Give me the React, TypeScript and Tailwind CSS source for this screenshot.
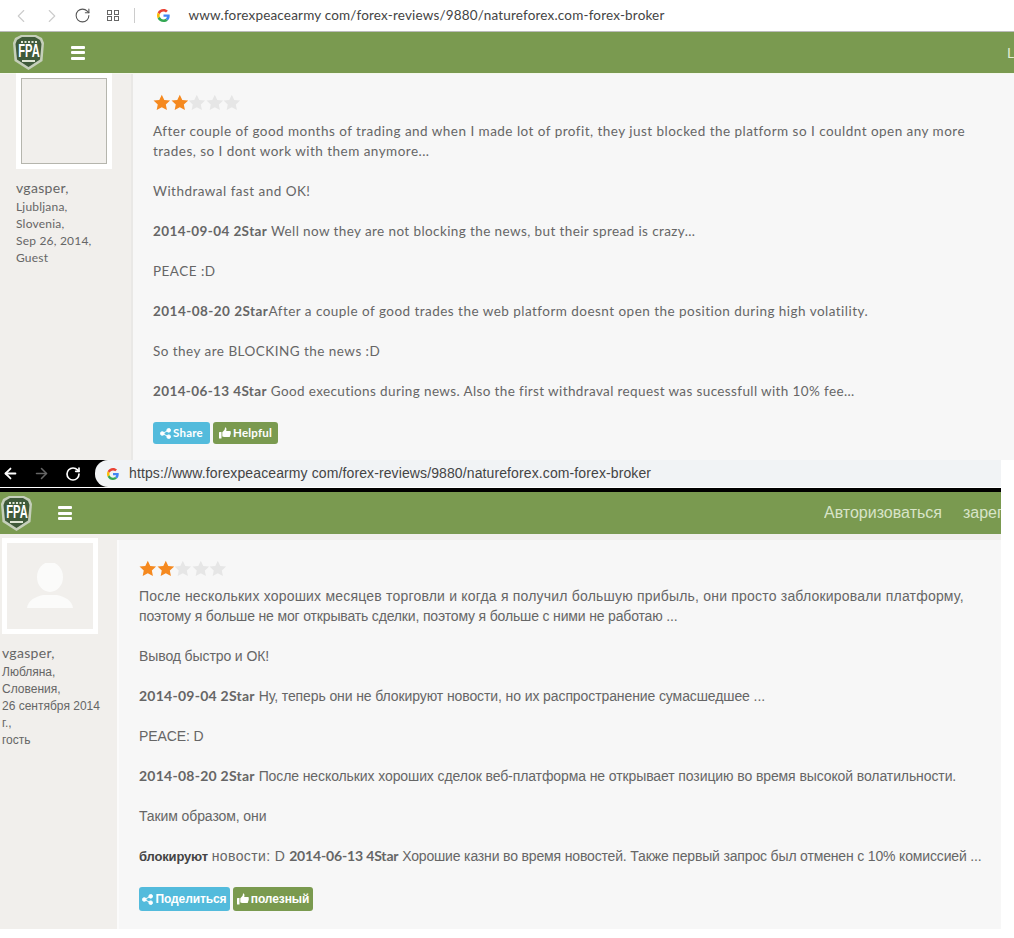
import React from "react";
import { ChevronLeft, ChevronRight, RotateCw, ArrowLeft, ArrowRight } from "lucide-react";

const latin = "font-['Lato','Open_Sans',sans-serif]";
const arial = "font-['Liberation_Sans',Arial,sans-serif]";
const boldDate = "font-['Lato','Open_Sans',sans-serif] tracking-[0.25px]";

const Star = ({ on }: { on: boolean }) => (
  <svg width="17.6" height="17" viewBox="0 0 24 24" fill={on ? "#f5891f" : "#e6e6e6"} preserveAspectRatio="none">
    <path d="M12 1l3.400 7.300 7.900 1-5.800 5.500 1.500 7.900L12 18.800l-7 3.900 1.500-7.900L.7 9.300l7.900-1z" />
  </svg>
);

const Stars = () => (
  <div className="flex h-[17px]">
    <Star on />
    <Star on />
    <Star on={false} />
    <Star on={false} />
    <Star on={false} />
  </div>
);

const GoogleG = ({ size }: { size: number }) => (
  <svg width={size} height={size} viewBox="0 0 48 48">
    <path fill="#EA4335" d="M24 9.500c3.500 0 6.700 1.200 9.200 3.600l6.900-6.900C35.900 2.400 30.500 0 24 0 14.600 0 6.500 5.400 2.600 13.200l8 6.200C12.400 13.700 17.700 9.500 24 9.500z" />
    <path fill="#4285F4" d="M46.900 24.500c0-1.600-.1-3.100-.4-4.500H24v9h12.900c-.6 3-2.200 5.500-4.700 7.200l7.700 6c4.500-4.200 7-10.300 7-17.700z" />
    <path fill="#FBBC05" d="M10.500 28.600c-.5-1.400-.8-3-.8-4.600s.3-3.200.8-4.600l-8-6.200C.9 16.400 0 20.100 0 24s.9 7.600 2.600 10.800l7.900-6.200z" />
    <path fill="#34A853" d="M24 48c6.500 0 11.900-2.100 15.900-5.800l-7.700-6c-2.100 1.400-4.900 2.300-8.200 2.300-6.300 0-11.600-4.200-13.500-9.900l-8 6.200C6.500 42.600 14.600 48 24 48z" />
  </svg>
);

// shield with silver rim, star row and the letters on top
const Logo = () => (
  <div className="relative w-[33px] h-[37px] shrink-0">
    <svg width="33" height="37" viewBox="0 0 33 37" className="absolute inset-0">
      <path d="M3 4 L9 1 H24 L30 4 L32 9 L30.500 27 L16.500 36 L2.500 27 L1 9Z" fill="#c5cfba" />
      <path d="M5 6 L10 3 H23 L28 6 L29.500 10 L28 25.500 L16.500 33 L5 25.500 L3.500 10Z" fill="#3f5a3a" />
      <g fill="#dfe6d5">
        <rect x="9" y="7" width="2" height="2" />
        <rect x="12.500" y="7" width="2" height="2" />
        <rect x="16" y="7" width="2" height="2" />
        <rect x="19.500" y="7" width="2" height="2" />
        <rect x="23" y="7" width="2" height="2" />
        <rect x="10" y="26" width="13" height="2" />
      </g>
    </svg>
    <span className="absolute left-0 right-0 top-[9px] text-center text-[18px] leading-[17px] font-bold text-white font-['Liberation_Sans',sans-serif] scale-x-[0.62]">
      FPA
    </span>
  </div>
);

const Burger = () => (
  <div className="flex flex-col gap-[2.500px] w-[14px]">
    <div className="h-[3px] rounded-[1px] bg-white" />
    <div className="h-[3px] rounded-[1px] bg-white" />
    <div className="h-[3px] rounded-[1px] bg-white" />
  </div>
);

const ShareIcon = () => (
  <svg width="11" height="11" viewBox="0 0 12 12" fill="white" stroke="white" strokeWidth="1">
    <circle cx="9.500" cy="2.500" r="2" />
    <circle cx="2.500" cy="6" r="2" />
    <circle cx="9.500" cy="9.500" r="2" />
    <path d="M9.500 2.500 2.500 6l7 3.500" fill="none" />
  </svg>
);

const ThumbIcon = () => (
  <svg width="12" height="12" viewBox="0 0 12 12" fill="white">
    <rect x="0" y="5" width="2.500" height="6.500" rx="0.500" />
    <path d="M3.300 5.200 5.400 3c.4-.5.500-1.500.6-2.500 1.300-.3 1.800 1.200 1.200 3.400h3.600c.9 0 1.300 1 .8 1.600.4.500.3 1.200-.2 1.600.3.600.1 1.200-.4 1.500.2.700-.2 1.500-1 1.500H5.500c-1 0-1.400-.4-2.200-.5z" />
  </svg>
);

const TopReview = () => (
  <div className="flex-1 flex min-h-0">
    <aside className={`w-[133px] shrink-0 bg-[#f1efec] border-r-2 border-[#e9e8e6] pl-4 text-[#666] ${latin}`}>
      <div className="w-[96px] h-[96px] -mt-[1px] bg-white p-[5px]">
        <div className="w-full h-full bg-[#f1efec] border border-[#b5b5ad]" />
      </div>
      <div className="mt-[10px] text-[14px] leading-[18px] tracking-[0.3px]">vgasper,</div>
      <div className="mt-[1px] text-[12px] leading-[17px] tracking-[0.2px]">
        <div>Ljubljana,</div>
        <div>Slovenia,</div>
        <div>Sep 26, 2014,</div>
        <div>Guest</div>
      </div>
    </aside>
    <main className={`flex-1 bg-[#f7f7f7] pl-5 pt-5 text-[13.500px] leading-[20px] tracking-[0.47px] text-[#666] ${latin}`}>
      <Stars />
      <p className="mt-[10px] w-[830px]">
        After couple of good months of trading and when I made lot of profit, they just blocked the platform so I couldnt open any more trades, so I dont work with them anymore...
      </p>
      <p className="mt-5">Withdrawal fast and OK!</p>
      <p className="mt-5 tracking-[0.4px]"><b>2014-09-04 2Star</b> Well now they are not blocking the news, but their spread is crazy...</p>
      <p className="mt-5">PEACE :D</p>
      <p className="mt-5"><b>2014-08-20 2Star</b>After a couple of good trades the web platform doesnt open the position during high volatility.</p>
      <p className="mt-5">So they are BLOCKING the news :D</p>
      <p className="mt-5 tracking-[0.38px]"><b>2014-06-13 4Star</b> Good executions during news. Also the first withdraval request was sucessfull with 10% fee...</p>
      <div className="mt-[21px] flex gap-[3px] text-[11.500px] font-bold tracking-[0.2px] text-white">
        <button className="h-[22px] w-[57px] rounded-[3px] bg-[#53bbdc] flex items-center justify-center gap-[2px]"><ShareIcon />Share</button>
        <button className="h-[22px] w-[65px] rounded-[3px] bg-[#7a9a4f] flex items-center justify-center gap-[2px]"><ThumbIcon />Helpful</button>
      </div>
    </main>
  </div>
);

const BottomReview = () => (
  <div className="flex-1 flex min-h-0 pt-[6px] bg-[#f1efec]">
    <aside className="w-[117px] shrink-0 pl-[2px] text-[#666]">
      <div className="w-[96px] h-[96px] -mt-[2px] bg-white p-[5px]">
        <div className="w-full h-full bg-[#f1efec] flex flex-col items-center justify-end pb-[20px]">
          <svg width="46" height="46" viewBox="0 0 46 46" fill="#fbfbfa">
            <ellipse cx="23" cy="14" rx="13" ry="15" />
            <path d="M0 45c1-8 8-11 16-13h14c8 2 15 5 16 13z" />
          </svg>
        </div>
      </div>
      <div className={`mt-[10px] text-[14px] leading-[18px] tracking-[0.3px] ${latin}`}>vgasper,</div>
      <div className={`mt-[2px] text-[12px] leading-[17px] ${arial}`}>
        <div>Любляна,</div>
        <div>Словения,</div>
        <div className="whitespace-nowrap">26 сентября 2014</div>
        <div>г.,</div>
        <div>гость</div>
      </div>
    </aside>
    <main className={`flex-1 bg-[#f7f7f7] border-l-2 border-[#fbfbfb] pl-5 pt-[20px] text-[14px] leading-[20px] tracking-[-0.1px] text-[#666] ${arial}`}>
      <Stars />
      <p className="mt-[9px] w-[830px]">
        <span className="tracking-[0.2px]">После нескольких хороших месяцев торговли и когда я получил большую прибыль, они просто заблокировали платформу,</span>{" "}
        <span className="tracking-[-0.16px]">поэтому я больше не мог открывать сделки, поэтому я больше с ними не работаю ...</span>
      </p>
      <p className="mt-5">Вывод быстро и ОК!</p>
      <p className="mt-5"><b className={boldDate}>2014-09-04 2Star</b> Ну, теперь они не блокируют новости, но их распространение сумасшедшее ...</p>
      <p className="mt-5">PEACE: D</p>
      <p className="mt-5"><b className={boldDate}>2014-08-20 2Star</b> После нескольких хороших сделок веб-платформа не открывает позицию во время высокой волатильности.</p>
      <p className="mt-5">Таким образом, они</p>
      <p className="mt-5 tracking-[-0.16px] whitespace-nowrap">
        <b className="text-[13px] text-[#444]">блокируют</b>{" "}
        <span className="tracking-[0.4px]">новости: D</span>{" "}
        <b className={latin}>2014-06-13 4Star</b> Хорошие казни во время новостей. Также первый запрос был отменен с 10% комиссией ...
      </p>
      <div className="mt-[20px] flex gap-[3px] text-[12px] font-bold text-white">
        <button className="h-[24px] w-[91px] rounded-[3px] bg-[#53bbdc] flex items-center justify-center gap-[2px]"><ShareIcon />Поделиться</button>
        <button className="h-[24px] w-[80px] rounded-[3px] bg-[#7a9a4f] flex items-center justify-center gap-[2px]"><ThumbIcon />полезный</button>
      </div>
    </main>
  </div>
);

export default function App() {
  return (
    <div className="w-[1014px] h-[938px] bg-white overflow-hidden flex flex-col">
      {/* first screenshot */}
      <section className="h-[460px] flex flex-col shrink-0">
        <div className={`h-[32px] bg-white flex items-center pl-[10px] text-[#555] border-b border-[#bbb] shrink-0 ${latin}`}>
          <ChevronLeft size={22} strokeWidth={1.2} className="text-[#ccc]" />
          <ChevronRight size={22} strokeWidth={1.2} className="text-[#ccc] ml-[9px]" />
          <RotateCw size={17} strokeWidth={1.5} className="text-[#555] ml-[11px]" />
          <div className="ml-[16px] grid grid-cols-2 gap-[1.500px]">
            <div className="w-[5px] h-[5px] border border-[#666]" />
            <div className="w-[5px] h-[5px] border border-[#666]" />
            <div className="w-[5px] h-[5px] border border-[#666]" />
            <div className="w-[5px] h-[5px] border border-[#666]" />
          </div>
          <div className="ml-[15px] w-px h-[15px] bg-[#ccc]" />
          <div className="ml-[22px]"><GoogleG size={13} /></div>
          <span className="ml-[19px] text-[13.500px] tracking-[0.18px] text-[#444]">www.forexpeacearmy com/forex-reviews/9880/natureforex.com-forex-broker</span>
        </div>
        <div className="h-[41px] bg-[#7a9a50] flex items-center pl-[12px] shrink-0">
          <Logo />
          <div className="ml-[26px]"><Burger /></div>
          <span className={`ml-auto w-[7px] overflow-hidden text-[14px] text-[#e4ecd6] ${latin}`}>L</span>
        </div>
        <div className="h-[1px] bg-[#f4f8ec] shrink-0" />
        <TopReview />
      </section>

      {/* second screenshot */}
      <section className="w-[1001px] h-[469px] flex flex-col shrink-0">
        <div className="h-[27px] bg-black flex items-center pl-[2px] shrink-0">
          <ArrowLeft size={17} strokeWidth={2.5} className="text-white" />
          <ArrowRight size={17} strokeWidth={2.2} className="text-[#666] ml-[14px]" />
          <RotateCw size={16} strokeWidth={2.5} className="text-white ml-[15px]" />
          <div className={`ml-[14px] flex-1 h-[27px] rounded-l-[13px] bg-[#f1f3f5] flex items-center pl-[12px] text-[14px] tracking-[0.11px] text-[#444] ${arial}`}>
            <GoogleG size={12} />
            <span className="ml-[10px]">https://www.forexpeacearmy com/forex-reviews/9880/natureforex.com-forex-broker</span>
          </div>
        </div>
        <div className="h-[5px] bg-black border-t border-white shrink-0" />
        <div className="h-[42px] bg-[#7a9a50] flex items-center shrink-0">
          <Logo />
          <div className="ml-[25px]"><Burger /></div>
          <div className={`ml-auto flex gap-[21px] text-[16px] text-[#d8e4c8] w-[177px] overflow-hidden whitespace-nowrap ${arial}`}>
            <span>Авторизоваться</span>
            <span>зарегистрироваться</span>
          </div>
        </div>
        <BottomReview />
      </section>
    </div>
  );
}
